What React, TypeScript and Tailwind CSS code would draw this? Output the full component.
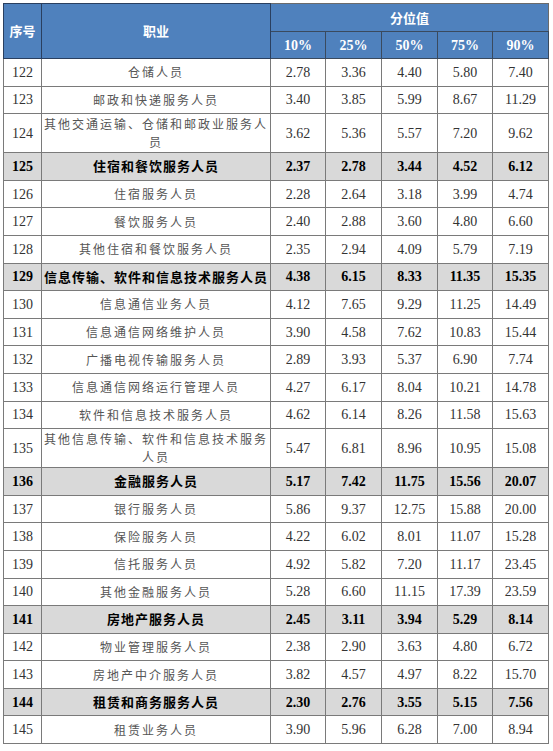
type Row = {
  no: number;
  job: string[];
  vals: string[];
  bold?: boolean;
};

const ROWS: Row[] = [
  { no: 122, job: ["仓储人员"], vals: ["2.78", "3.36", "4.40", "5.80", "7.40"] },
  { no: 123, job: ["邮政和快递服务人员"], vals: ["3.40", "3.85", "5.99", "8.67", "11.29"] },
  { no: 124, job: ["其他交通运输、仓储和邮政业服务人", "员"], vals: ["3.62", "5.36", "5.57", "7.20", "9.62"] },
  { no: 125, job: ["住宿和餐饮服务人员"], vals: ["2.37", "2.78", "3.44", "4.52", "6.12"], bold: true },
  { no: 126, job: ["住宿服务人员"], vals: ["2.28", "2.64", "3.18", "3.99", "4.74"] },
  { no: 127, job: ["餐饮服务人员"], vals: ["2.40", "2.88", "3.60", "4.80", "6.60"] },
  { no: 128, job: ["其他住宿和餐饮服务人员"], vals: ["2.35", "2.94", "4.09", "5.79", "7.19"] },
  { no: 129, job: ["信息传输、软件和信息技术服务人员"], vals: ["4.38", "6.15", "8.33", "11.35", "15.35"], bold: true },
  { no: 130, job: ["信息通信业务人员"], vals: ["4.12", "7.65", "9.29", "11.25", "14.49"] },
  { no: 131, job: ["信息通信网络维护人员"], vals: ["3.90", "4.58", "7.62", "10.83", "15.44"] },
  { no: 132, job: ["广播电视传输服务人员"], vals: ["2.89", "3.93", "5.37", "6.90", "7.74"] },
  { no: 133, job: ["信息通信网络运行管理人员"], vals: ["4.27", "6.17", "8.04", "10.21", "14.78"] },
  { no: 134, job: ["软件和信息技术服务人员"], vals: ["4.62", "6.14", "8.26", "11.58", "15.63"] },
  { no: 135, job: ["其他信息传输、软件和信息技术服务", "人员"], vals: ["5.47", "6.81", "8.96", "10.95", "15.08"] },
  { no: 136, job: ["金融服务人员"], vals: ["5.17", "7.42", "11.75", "15.56", "20.07"], bold: true },
  { no: 137, job: ["银行服务人员"], vals: ["5.86", "9.37", "12.75", "15.88", "20.00"] },
  { no: 138, job: ["保险服务人员"], vals: ["4.22", "6.02", "8.01", "11.07", "15.28"] },
  { no: 139, job: ["信托服务人员"], vals: ["4.92", "5.82", "7.20", "11.17", "23.45"] },
  { no: 140, job: ["其他金融服务人员"], vals: ["5.28", "6.60", "11.15", "17.39", "23.59"] },
  { no: 141, job: ["房地产服务人员"], vals: ["2.45", "3.11", "3.94", "5.29", "8.14"], bold: true },
  { no: 142, job: ["物业管理服务人员"], vals: ["2.38", "2.90", "3.63", "4.80", "6.72"] },
  { no: 143, job: ["房地产中介服务人员"], vals: ["3.82", "4.57", "4.97", "8.22", "15.70"] },
  { no: 144, job: ["租赁和商务服务人员"], vals: ["2.30", "2.76", "3.55", "5.15", "7.56"], bold: true },
  { no: 145, job: ["租赁业务人员"], vals: ["3.90", "5.96", "6.28", "7.00", "8.94"] },
];

const PCTS = ["10%", "25%", "50%", "75%", "90%"];

export default function App() {
  return (
    <div className="w-[553px] h-[751px] bg-white pl-[3px] pt-[3px]">
      <table className="w-[545px] table-fixed border-collapse border border-[#6b6b6b] font-['Liberation_Serif',serif] text-[14px]">
        <colgroup>
          <col className="w-[38px]" />
          <col className="w-[229px]" />
          <col className="w-[55px]" />
          <col className="w-[56px]" />
          <col className="w-[56px]" />
          <col className="w-[55px]" />
          <col className="w-[56px]" />
        </colgroup>
        <thead>
          <tr className="h-[28px] bg-[#4f81bd] text-white">
            <th
              rowSpan={2}
              className="border border-[#2a3f5f] font-['Noto_Sans_CJK_SC',sans-serif] text-[13px] font-bold"
            >
              序号
            </th>
            <th
              rowSpan={2}
              className="border border-[#2a3f5f] font-['Noto_Sans_CJK_SC',sans-serif] text-[13px] font-bold"
            >
              职业
            </th>
            <th
              colSpan={5}
              className="border-b border-[#3a4a5e] font-['Noto_Sans_CJK_SC',sans-serif] text-[13px] font-bold"
            >
              分位值
            </th>
          </tr>
          <tr className="h-[27px] bg-[#4f81bd] text-white">
            {PCTS.map((p) => (
              <th key={p} className="border border-[#3a4a5e] text-[14px] font-bold">
                {p}
              </th>
            ))}
          </tr>
        </thead>
        <tbody>
          {ROWS.map((r) => (
            <tr
              key={r.no}
              className={`${r.job.length > 1 ? "h-[39px]" : "h-[27.6px]"} ${
                r.bold ? "bg-[#d9d9d9] font-bold text-black" : "text-[#333]"
              }`}
            >
              <td className="border border-[#7a7a7a] text-center">{r.no}</td>
              <td
                className={`border border-[#7a7a7a] px-[2px] text-center font-['Noto_Sans_CJK_SC',sans-serif] leading-[18px] ${
                  r.bold ? "text-[13px] tracking-[1px] text-black" : "text-[12px] tracking-[2px] text-[#555]"
                }`}
              >
                {r.job.map((line, i) => (
                  <div key={i} className="whitespace-nowrap">
                    {line}
                  </div>
                ))}
              </td>
              {r.vals.map((v, i) => (
                <td key={i} className="border border-[#7a7a7a] text-center">
                  {v}
                </td>
              ))}
            </tr>
          ))}
        </tbody>
      </table>
    </div>
  );
}
